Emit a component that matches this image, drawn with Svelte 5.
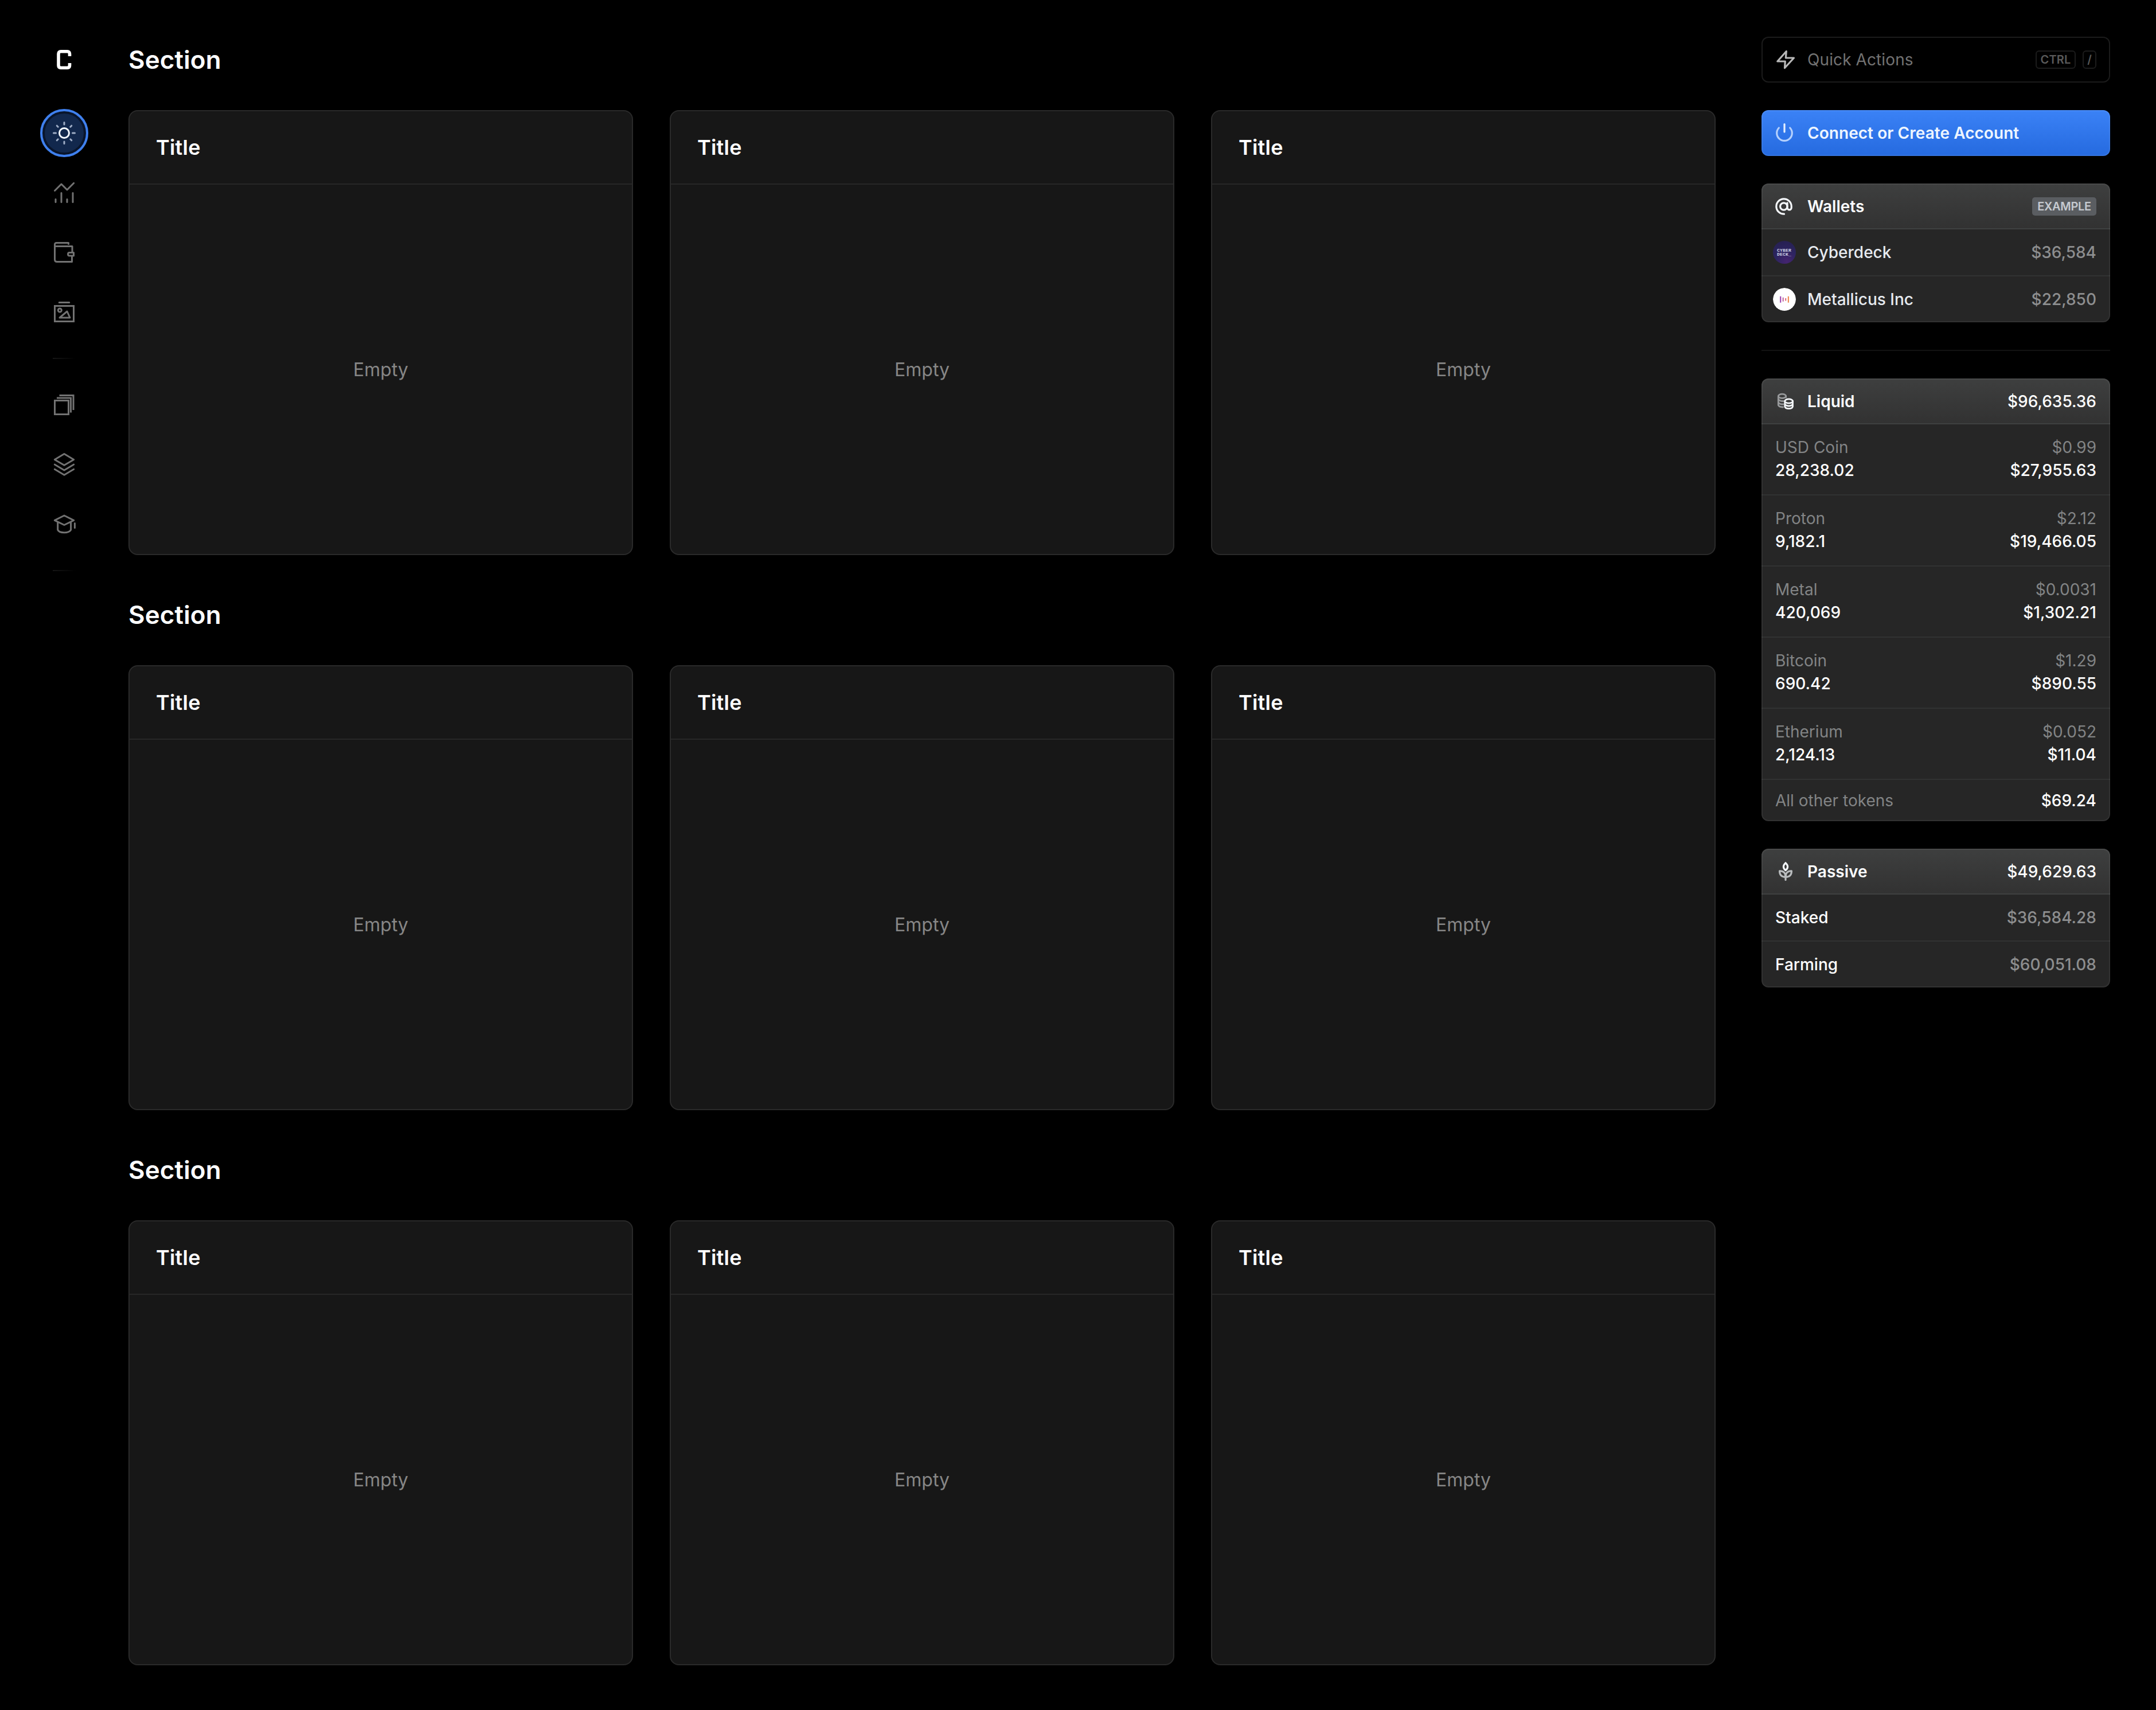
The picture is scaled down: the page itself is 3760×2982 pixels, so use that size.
<script lang="ts">
  const rows = [1, 2, 3];
  const cards = [1, 2, 3];

  const wallets = [
    { name: 'Cyberdeck', value: '$36,584', logo: 'cyber' },
    { name: 'Metallicus Inc', value: '$22,850', logo: 'metal' },
  ];

  const tokens = [
    { name: 'USD Coin', price: '$0.99', amount: '28,238.02', value: '$27,955.63' },
    { name: 'Proton', price: '$2.12', amount: '9,182.1', value: '$19,466.05' },
    { name: 'Metal', price: '$0.0031', amount: '420,069', value: '$1,302.21' },
    { name: 'Bitcoin', price: '$1.29', amount: '690.42', value: '$890.55' },
    { name: 'Etherium', price: '$0.052', amount: '2,124.13', value: '$11.04' },
  ];

  const passive = [
    { name: 'Staked', value: '$36,584.28' },
    { name: 'Farming', value: '$60,051.08' },
  ];
</script>

<div class="app">
  <nav class="sidebar" aria-label="Main">
    <svg class="logo" width="28" height="34" viewBox="0 0 28 34">
      <path d="M23.500 11V7Q23.500 2.800 19.500 2.800H8Q4 2.800 4 7V27Q4 31.200 8 31.200H19.500Q23.500 31.200 23.500 27V23" />
    </svg>

    <button class="nav-item active" aria-label="Today">
      <svg class="icon" width="48" height="48" viewBox="0 0 48 48">
        <circle class="sun" cx="24" cy="24" r="8.500" />
        <path
          d="M24 5.500v3.500M24 39v3.500M5.500 24h4M38.500 24h4M11.200 11.200l2 2M34.800 34.800l2 2M11.200 36.800l2-2M34.800 13.200l2-2"
        />
      </svg>
    </button>
    <button class="nav-item" aria-label="Markets">
      <svg class="icon" width="48" height="48" viewBox="0 0 48 48">
        <path d="M7.500 20.500L19 9L29 19L40.700 7.300M9 35.500v5M19 24.500v16M29 35.500v5M39 24.500v16" />
      </svg>
    </button>
    <button class="nav-item" aria-label="Wallet">
      <svg class="icon" width="48" height="48" viewBox="0 0 48 48">
        <path d="M31.500 9.500V7.500H10.500Q7.500 7.500 7.500 10.500V36.500Q7.500 40.500 11.500 40.500H37.500V31.500M38 23.500V13.500H8" />
        <path d="M40.500 24.500H33Q30.500 24.500 30.500 27.250T33 30H40.500Z" />
      </svg>
    </button>
    <button class="nav-item" aria-label="Collectibles">
      <svg class="icon" width="48" height="48" viewBox="0 0 48 48">
        <path class="square" d="M7.500 13.500h33v27h-33z" />
        <path d="M15.200 7.500h17.600M16 34L29 23L34 34Z" />
        <circle cx="16.300" cy="21" r="3" />
      </svg>
    </button>

    <div class="nav-divider"></div>

    <button class="nav-item" aria-label="Collections">
      <svg class="icon" width="48" height="48" viewBox="0 0 48 48">
        <path class="square" d="M7.500 16.500h24v24h-24zM11 12h24.500v25.500M15.500 7.500h24.500v25.500" />
      </svg>
    </button>
    <button class="nav-item" aria-label="Stacks">
      <svg class="icon" width="48" height="48" viewBox="0 0 48 48">
        <path d="M24 5.500L40.700 15.500L24 25.300L7.300 15.500ZM7.300 24L24 34L40.700 24M7.300 32.300L24 42.300L40.700 32.300" />
      </svg>
    </button>
    <button class="nav-item" aria-label="Learn">
      <svg class="icon" width="48" height="48" viewBox="0 0 48 48">
        <path d="M24 9L40.700 17.300L24 25.500L7.300 17.300ZM12.700 20.500V34Q15 38.700 24 38.700T35.600 34V20.500M42.400 22.500v8" />
      </svg>
    </button>

    <div class="nav-divider"></div>
  </nav>

  <main class="content">
    {#each rows as row (row)}
      <section class="section">
        <h2>Section</h2>
        <div class="card-grid">
          {#each cards as card (card)}
            <article class="card">
              <header><h3>Title</h3></header>
              <div class="card-body">Empty</div>
            </article>
          {/each}
        </div>
      </section>
    {/each}
  </main>

  <aside class="panel">
    <button class="bar quick">
      <svg class="bar-icon" width="40" height="40" viewBox="-2 0 40 40">
        <path d="M21.300 5.500L20.300 17H34.500L18.500 34.500L19.300 23H5.800Z" />
      </svg>
      <span class="label">Quick Actions</span>
      <kbd>CTRL</kbd>
      <kbd class="slash">/</kbd>
    </button>

    <button class="bar connect">
      <svg class="bar-icon" width="40" height="40" viewBox="0 0 40 40">
        <path class="dim" d="M10.300 11A13.300 13.300 0 1 0 29.700 11" />
        <path d="M20 4.500v13.500" />
      </svg>
      <span class="label">Connect or Create Account</span>
    </button>

    <div class="group">
      <div class="bar group-head">
        <svg class="bar-icon" width="40" height="40" viewBox="0 0 40 40">
          <circle cx="18.800" cy="20" r="6.200" />
          <path d="M25 13.800v8.500a3.600 3.600 0 0 0 7.200 0V20A13.200 13.200 0 1 0 19.500 33.200" />
        </svg>
        <span class="label">Wallets</span>
        <span class="tag">EXAMPLE</span>
      </div>
      {#each wallets as wallet (wallet.name)}
        <div class="row wallet">
          {#if wallet.logo === 'cyber'}
            <span class="avatar cyber">CYBER<br />DECK_</span>
          {:else}
            <svg class="avatar" width="40" height="40" viewBox="0 0 40 40">
              <circle cx="20" cy="20" r="20" fill="#fff" />
              <path d="M13.200 14.700v11" stroke="#a04cb4" stroke-width="2.200" />
              <path d="M17.700 16.700v7" stroke="#c0609c" stroke-width="2" />
              <path d="M22.200 18v4.500" stroke="#e06a74" stroke-width="2" />
              <path d="M26.900 14.700v11" stroke="#f09058" stroke-width="2.200" />
            </svg>
          {/if}
          <span class="label">{wallet.name}</span>
          <span class="muted">{wallet.value}</span>
        </div>
      {/each}
    </div>

    <hr />

    <div class="group">
      <div class="bar group-head">
        <svg class="bar-icon coins" width="40" height="40" viewBox="-2 0 40 40">
          <g class="dim">
            <ellipse cx="14" cy="10.800" rx="6.700" ry="3.600" />
            <path d="M7.300 10.800V26.500Q8.500 29.800 15.500 30M7.300 16Q8.500 19.500 16 19.500M7.300 21.500Q8.500 25 16 25M20.700 10.800V13" />
          </g>
          <ellipse cx="25.600" cy="19.500" rx="6.900" ry="3.600" />
          <path d="M18.700 19.500V29Q20 32.700 25.600 32.700T32.500 29V19.500M18.700 24.300Q20 28 25.600 28T32.500 24.300" />
        </svg>
        <span class="label">Liquid</span>
        <span>$96,635.36</span>
      </div>
      {#each tokens as token (token.name)}
        <div class="token">
          <span class="dimmed">{token.name}</span>
          <span class="dimmed end">{token.price}</span>
          <span>{token.amount}</span>
          <span class="end">{token.value}</span>
        </div>
      {/each}
      <div class="row other">
        <span class="label dimmed">All other tokens</span>
        <span>$69.24</span>
      </div>
    </div>

    <div class="group">
      <div class="bar group-head">
        <svg class="bar-icon" width="40" height="40" viewBox="-2 0 40 40">
          <path
            class="dim"
            d="M20 34.500V24M20 29.300C13 29.500 9.300 25.500 9.600 18.800C16.500 18.500 20 22.500 20 29.300C20 22.500 23.500 18.500 30.400 18.800C30.700 25.500 27 29.500 20 29.300"
          />
          <path d="M20 4.800Q12.800 11.500 20 17.800Q27.200 11.500 20 4.800Z" />
        </svg>
        <span class="label">Passive</span>
        <span>$49,629.63</span>
      </div>
      {#each passive as item (item.name)}
        <div class="row">
          <span class="label">{item.name}</span>
          <span class="muted">{item.value}</span>
        </div>
      {/each}
    </div>
  </aside>
</div>

<style>
  :global(body) {
    background: #000;
  }

  .app {
    display: grid;
    grid-template-columns: 224px 2768px 608px;
    column-gap: 0;
    height: 2982px;
    overflow: hidden;
    background: #000;
    color: #fff;
    font-family: Inter, sans-serif;
    font-size: 28px;
    line-height: 40px;
  }

  .app * {
    box-sizing: border-box;
  }

  button {
    font: inherit;
    color: inherit;
    text-align: left;
    border: 0;
    background: none;
    padding: 0;
    cursor: pointer;
  }

  /* Sidebar */
  .sidebar {
    display: flex;
    flex-direction: column;
    align-items: center;
    gap: 20px;
    padding-top: 87px;
  }

  .logo {
    margin-bottom: 49px;
    fill: none;
    stroke: #fff;
    stroke-width: 5.6;
  }

  .nav-item {
    flex: none;
    display: flex;
    align-items: center;
    justify-content: center;
    width: 84px;
    height: 84px;
    border-radius: 50%;
    color: #727272;
  }

  .nav-item.active {
    border: 4px solid #3f80ee;
    background: #12284d;
    box-shadow: inset 0 0 0 4px #09152b;
    color: #9fadc6;
  }

  .icon {
    fill: none;
    stroke: currentColor;
    stroke-width: 3;
    stroke-linecap: round;
    stroke-linejoin: round;
  }

  .icon .square {
    stroke-linecap: butt;
    stroke-linejoin: miter;
  }

  .sun {
    stroke: #f3f8ff;
  }

  .nav-divider {
    flex: none;
    width: 40px;
    height: 2px;
    margin: 18px 0;
    background: linear-gradient(90deg, #161616, #000);
  }

  /* Sections */
  .content {
    display: flex;
    flex-direction: column;
    gap: 76px;
    padding-top: 76px;
  }

  h2,
  h3 {
    margin: 0;
    font-weight: 600;
  }

  h2 {
    margin-bottom: 60px;
    font-size: 44px;
    line-height: 56px;
    letter-spacing: 0.1px;
  }

  h3 {
    font-size: 36px;
    line-height: 48px;
    letter-spacing: 0.2px;
  }

  .card-grid {
    display: grid;
    grid-template-columns: repeat(3, 880px);
    gap: 64px;
  }

  .card {
    display: flex;
    flex-direction: column;
    height: 776px;
    border: 2px solid #2a2a2a;
    border-radius: 16px;
    background: #171717;
  }

  .card header {
    display: flex;
    align-items: center;
    height: 128px;
    padding: 0 46px;
    border-bottom: 2px solid #272727;
  }

  .card-body {
    flex: 1;
    display: flex;
    align-items: center;
    justify-content: center;
    padding-top: 2px;
    font-size: 32px;
    color: #868686;
  }

  /* Right panel */
  .panel {
    display: flex;
    flex-direction: column;
    gap: 48px;
    width: 608px;
    margin-left: 80px;
    padding-top: 64px;
  }

  .bar {
    flex: none;
    display: flex;
    align-items: center;
    width: 100%;
    height: 80px;
    padding: 0 24px 0 20px;
  }

  .bar-icon {
    margin-right: 20px;
    fill: none;
    stroke: #f4f7fa;
    stroke-width: 3.2;
    stroke-linecap: round;
    stroke-linejoin: round;
  }

  .bar-icon.coins {
    stroke-width: 2.8;
  }

  .bar-icon .dim {
    stroke: #b9bcbe;
  }

  .coins .dim {
    stroke: #97999b;
  }

  .label {
    flex: 1;
  }

  .quick {
    padding: 0 22px 0 18px;
    border: 2px solid #1b1b1b;
    border-radius: 12px;
    letter-spacing: 0.1px;
    color: #727272;
  }

  .quick .bar-icon {
    stroke: #b8b8b8;
  }

  kbd {
    height: 32px;
    padding: 0 7px;
    border: 2px solid #1c1c1c;
    border-radius: 6px;
    font-family: inherit;
    font-size: 20px;
    font-weight: 600;
    line-height: 28px;
    color: #5a5a5a;
  }

  kbd.slash {
    margin-left: 12px;
    padding: 0 6px;
  }

  .connect {
    border-radius: 12px;
    background: linear-gradient(#3b82f6, #256adf);
    box-shadow: inset 0 0 0 2px rgba(255, 255, 255, 0.07);
    color: #edf5ff;
    font-weight: 600;
    letter-spacing: 0.05px;
  }

  .connect .bar-icon {
    stroke: #e6f0ff;
  }

  .connect .bar-icon .dim {
    stroke: #b4d0fd;
  }

  .group {
    position: relative;
    overflow: hidden;
    border-radius: 12px;
    background: #262626;
    font-weight: 500;
  }

  /* hairline drawn above the header gradient and the rows */
  .group::after {
    content: '';
    position: absolute;
    inset: 0;
    border: 2px solid rgba(255, 255, 255, 0.06);
    border-radius: 12px;
    pointer-events: none;
  }

  .group-head {
    padding-top: 2px;
    border-bottom: 2px solid #3f4141;
    background: linear-gradient(#3e3f3f, #323232);
  }

  .group-head .label {
    font-weight: 600;
    color: #fbfdff;
  }

  .tag {
    width: 112px;
    height: 32px;
    border-radius: 5px;
    background: #5a5d61;
    font-size: 20px;
    font-weight: 600;
    line-height: 32px;
    letter-spacing: -0.3px;
    text-align: center;
    color: #c6cad0;
  }

  .row {
    display: flex;
    align-items: center;
    height: 82px;
    padding: 0 24px;
    border-bottom: 2px solid #313232;
  }

  .row:last-child {
    height: 80px;
    border-bottom: 0;
  }

  .row.other {
    height: 72px;
  }

  .wallet {
    padding-left: 20px;
  }

  .wallet .label {
    font-weight: 450;
    color: #e6eaef;
  }

  .avatar {
    flex: none;
    width: 40px;
    height: 40px;
    margin-right: 20px;
    border-radius: 50%;
  }

  .cyber {
    padding: 13px 0 0 7px;
    background: radial-gradient(circle at 60% 90%, #45246f, #2c2460 45%, #241f4c);
    font-family: 'Liberation Mono', monospace;
    font-size: 8px;
    font-weight: 700;
    line-height: 7px;
    letter-spacing: 0.2px;
    color: #cfd0e4;
  }

  .muted {
    color: #8d8e8f;
  }

  .dimmed {
    font-weight: 400;
    color: #828485;
  }

  .token {
    display: grid;
    grid-template-columns: 1fr auto;
    grid-template-rows: 40px 40px;
    height: 124px;
    padding: 20px 24px;
    border-bottom: 2px solid #313232;
  }

  .end {
    text-align: right;
  }

  hr {
    width: 100%;
    height: 2px;
    margin: 0;
    border: 0;
    background: #121212;
  }
</style>
